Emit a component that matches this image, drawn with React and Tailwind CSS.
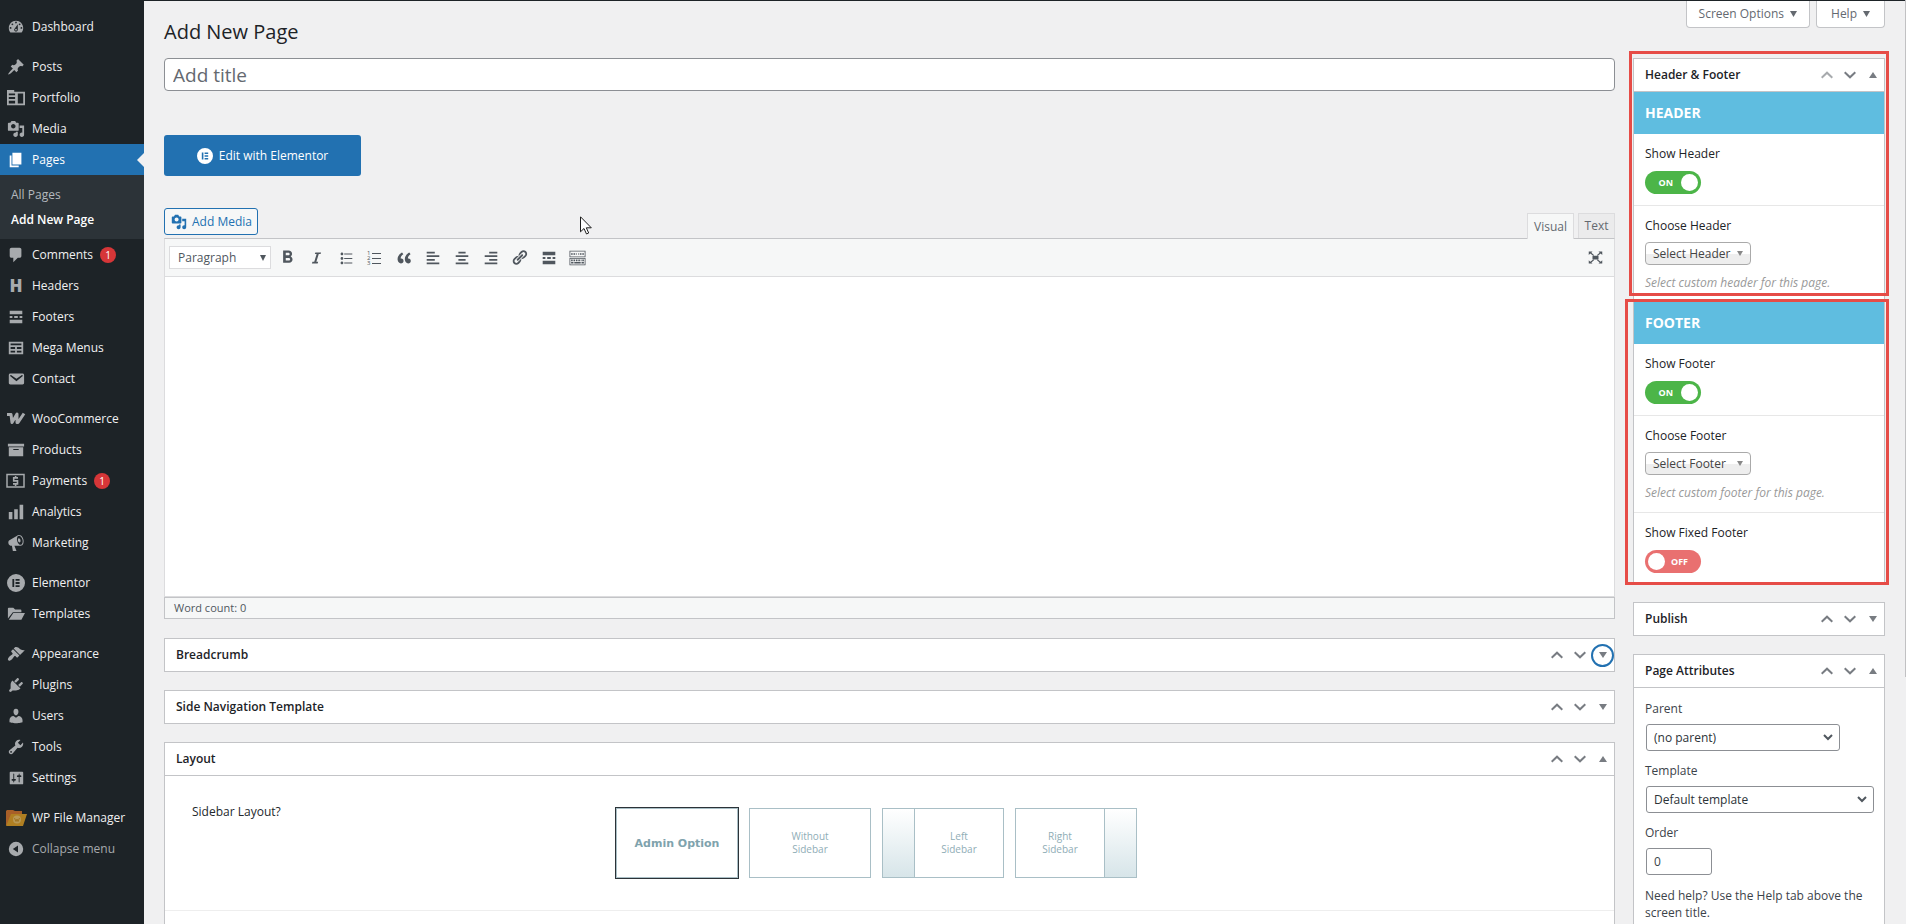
import { useState } from "react";
import clsx from "clsx";
import { MdFormatBold } from "react-icons/md";

const icons = {
  dashboard: "M3.76 16h12.48c1.1-1.37 1.76-3.11 1.76-5 0-4.42-3.58-8-8-8s-8 3.58-8 8c0 1.89.66 3.63 1.76 5zM10 4c.55 0 1 .45 1 1s-.45 1-1 1-1-.45-1-1 .45-1 1-1zM6 6c.55 0 1 .45 1 1s-.45 1-1 1-1-.45-1-1 .45-1 1-1zm8 0c.55 0 1 .45 1 1s-.45 1-1 1-1-.45-1-1 .45-1 1-1zm-5.37 5.55L12 7v6c0 1.1-.9 2-2 2s-2-.9-2-2c0-.57.24-1.08.63-1.45zM4 10c.55 0 1 .45 1 1s-.45 1-1 1-1-.45-1-1 .45-1 1-1zm12 0c.55 0 1 .45 1 1s-.45 1-1 1-1-.45-1-1 .45-1 1-1zm-5 3c0-.55-.45-1-1-1s-1 .45-1 1 .45 1 1 1 1-.45 1-1z",
  post: "M10.44 3.02l1.82-1.82 6.36 6.35-1.83 1.82c-1.05-.68-2.48-.57-3.41.36l-.75.75c-.92.93-1.04 2.35-.35 3.41l-1.83 1.82-2.41-2.41-2.8 2.79c-.42.42-3.38 2.71-3.8 2.29s1.86-3.39 2.28-3.81l2.79-2.79L4.1 9.36l1.83-1.82c1.05.69 2.48.57 3.4-.36l.75-.75c.93-.92 1.05-2.35.36-3.41z",
  portfolio: "M0 1h8v2h12v15H0V1zm2 4v2h7V5H2zm0 4v2h7V9H2zm0 4v3h7v-3H2zm10-8v11h6V5h-6z",
  media: "M13 11V4c0-.55-.45-1-1-1h-1.67L9 1H5L3.67 3H2c-.55 0-1 .45-1 1v7c0 .55.45 1 1 1h10c.55 0 1-.45 1-1zM7 4.5c1.38 0 2.5 1.12 2.5 2.5S8.38 9.5 7 9.5 4.5 8.38 4.5 7 5.62 4.5 7 4.5zM14 6h5v10.5c0 1.38-1.12 2.5-2.5 2.5S14 17.88 14 16.5s1.12-2.5 2.5-2.5c.17 0 .34.02.5.05V9h-3V6zm-4 8.05V13h2v3.5c0 1.38-1.12 2.5-2.5 2.5S7 17.88 7 16.5 8.12 14 9.5 14c.17 0 .34.02.5.05z",
  page: "M6 15V2h10v13H6zm-1 1h8v2H3V5h2v11z",
  comments: "M5 2h9c1.1 0 2 .9 2 2v7c0 1.1-.9 2-2 2h-2l-5 5v-5H5c-1.1 0-2-.9-2-2V4c0-1.1.9-2 2-2z",
  more: "M17 7V3H3v4h14zM6 11V9H3v2h3zm6 0V9H8v2h4zm5 0V9h-3v2h3zm0 6v-4H3v4h14z",
  table: "M18 17V3H2v14h16zM16 7H4V5h12v2zm-7 4H4V9h5v2zm7 0h-5V9h5v2zm-7 4H4v-2h5v2zm7 0h-5v-2h5v2z",
  email: "M3.87 4h13.25C18.37 4 19 4.59 19 5.79v8.42c0 1.19-.63 1.79-1.88 1.79H3.87c-1.25 0-1.88-.6-1.88-1.79V5.79c0-1.2.63-1.79 1.88-1.79zm6.62 8.6l6.74-5.53c.24-.2.43-.66.13-1.07-.29-.41-.82-.42-1.17-.17l-5.7 3.86L4.8 5.83c-.35-.25-.88-.24-1.17.17-.3.41-.11.87.13 1.07z",
  archive: "M19 3v3H1V3h18zM2 7h16v10H2V7zm11 3V9H7v1h6z",
  chart: "M18 18V2h-4v16h4zm-6 0V7H8v11h4zm-6 0v-8H2v8h4z",
  megaphone: "M18.15 5.94c.46 1.62.38 3.22-.02 4.48-.42 1.28-1.26 2.18-2.3 2.48-.16.06-.26.06-.4.06-.06.02-.12.02-.18.02-.06.02-.14.02-.22.02h-6.8l2.22 5.5c.02.14-.06.26-.14.34-.08.1-.24.16-.34.16H6.95c-.1 0-.26-.06-.34-.16-.08-.08-.16-.2-.14-.34l-1-5.5H4.25l-.02-.02c-.5.06-1.08-.18-1.54-.62s-.88-1.08-1.06-1.88c-.24-.8-.2-1.56-.02-2.2.18-.62.58-1.08 1.06-1.3l.02-.02 9-5.4c.1-.06.18-.1.24-.16.06-.04.14-.08.24-.12.16-.08.28-.12.5-.18 1.04-.3 2.24.1 3.22.98s1.84 2.24 2.26 3.86zm-2.58 5.98h-.02c.4-.1.74-.34 1.04-.7.58-.7.86-1.76.86-3.04 0-.64-.1-1.3-.28-1.98-.34-1.36-1.02-2.5-1.78-3.24s-1.68-1.1-2.46-.88c-.82.22-1.4.96-1.7 2-.32 1.04-.28 2.36.06 3.72.38 1.36 1 2.5 1.8 3.24.78.74 1.62 1.1 2.48.88zm-2.54-7.08c.22-.04.42-.02.62.04.38.16.76.48 1.02 1s.42 1.2.42 1.78c0 .3-.04.56-.12.8-.18.48-.44.84-.86.94-.34.1-.8-.06-1.14-.4s-.64-.86-.78-1.5c-.18-.62-.12-1.24.02-1.72s.48-.84.82-.94z",
  folder: "M1 15V4c0-.6.4-1 1-1h5l2 2h6c.6 0 1 .4 1 1v2H6.500L1 15zm1 1.500L7 9h13l-4 7.500H2z",
  appearance: "M14.48 11.06L7.41 3.99l1.5-1.5c.5-.56 2.3-.47 3.51.32 1.21.8 1.43 1.28 2.91 2.1 1.18.64 2.45 1.26 4.45.85zm-.71.71L6.7 4.7 4.93 6.47c-.39.39-.39 1.02 0 1.41l1.06 1.06c.39.39.39 1.03 0 1.42-.6.6-1.43 1.11-2.21 1.69-.35.26-.7.53-1.01.84C1.43 14.23.4 16.08 1.4 17.07c.99 1 2.84-.03 4.18-1.36.31-.31.58-.66.85-1.02.57-.78 1.08-1.61 1.69-2.21.39-.39 1.02-.39 1.41 0l1.06 1.06c.39.39 1.02.39 1.41 0z",
  plugins: "M13.11 4.36L9.87 7.6 8 5.73l3.24-3.24c.35-.34 1.05-.2 1.56.32.52.51.66 1.21.31 1.55zm-8 1.77l.91-1.12 9.01 9.01-1.19.84c-.71.71-2.63 1.16-3.82 1.16H6.14L4.9 17.26c-.59.59-1.54.59-2.12 0-.59-.58-.59-1.53 0-2.12l1.24-1.24v-3.88c0-1.13.4-3.19 1.09-3.89zm7.26 3.97l3.24-3.24c.34-.35 1.04-.21 1.55.31.52.51.66 1.21.31 1.55l-3.24 3.25z",
  users: "M10 9.25c-2.27 0-2.73-3.44-2.73-3.44C7 4.02 7.82 2 9.97 2c2.16 0 2.98 2.02 2.71 3.81 0 0-.41 3.44-2.68 3.44zm0 2.57L12.72 10c2.39 0 4.52 2.33 4.52 4.53v2.49s-3.65 1.13-7.24 1.13c-3.65 0-7.24-1.13-7.24-1.13v-2.49c0-2.25 1.94-4.48 4.47-4.48z",
  tools: "M16.68 9.77c-1.34 1.34-3.3 1.67-4.95.99l-5.41 6.52c-.99.99-2.59.99-3.58 0s-.99-2.59 0-3.57l6.52-5.42c-.68-1.65-.35-3.61.99-4.95 1.28-1.28 3.12-1.62 4.72-1.06l-2.89 2.89 2.82 2.82 2.86-2.87c.53 1.58.18 3.39-1.08 4.65zM3.81 16.21c.4.39 1.04.39 1.43 0 .4-.4.4-1.04 0-1.43-.39-.4-1.03-.4-1.43 0-.39.39-.39 1.03 0 1.43z",
  settings: "M18 16V4c0-.55-.45-1-1-1H4c-.55 0-1 .45-1 1v12c0 .55.45 1 1 1h13c.55 0 1-.45 1-1zM8 11h1c.55 0 1 .45 1 1s-.45 1-1 1H8v1.5c0 .28-.22.5-.5.5s-.5-.22-.5-.5V13H6c-.55 0-1-.45-1-1s.45-1 1-1h1V5.5c0-.28.22-.5.5-.5s.5.22.5.5V11zm5-2h-1c-.55 0-1-.45-1-1s.45-1 1-1h1V5.5c0-.28.22-.5.5-.5s.5.22.5.5V7h1c.55 0 1 .45 1 1s-.45 1-1 1h-1v5.5c0 .28-.22.5-.5.5s-.5-.22-.5-.5V9z",
  collapse: "M10 1a9 9 0 1 0 0 18a9 9 0 1 0 0-18zM12.500 5.500v9L6 10z",
  elementor: "M10 0a10 10 0 1 0 0 20a10 10 0 1 0 0-20zM6 5.500h2v9H6zM9.500 5.500H14v2H9.500zM9.500 9H14v2H9.500zM9.500 12.500H14v2H9.500z",
  italic: "M14.78 6h-2.13l-2.8 9h2.12l-.62 2H4.6l.62-2h2.14l2.8-9H8.03l.62-2h6.75z",
  bullets: "M5.5 7C4.67 7 4 6.33 4 5.5 4 4.68 4.67 4 5.5 4 6.32 4 7 4.68 7 5.5 7 6.33 6.32 7 5.5 7zM8 5h9v1H8V5zm-2.5 7c-.83 0-1.5-.67-1.5-1.5C4 9.68 4.67 9 5.5 9c.82 0 1.5.68 1.5 1.5 0 .83-.68 1.5-1.5 1.5zM8 10h9v1H8v-1zm-2.5 7c-.83 0-1.5-.67-1.5-1.5 0-.82.67-1.5 1.5-1.5.82 0 1.5.68 1.5 1.5 0 .83-.68 1.5-1.5 1.5zM8 15h9v1H8v-1z",
  quote: "M9.49 13.22c0-.74-.2-1.38-.61-1.9-.62-.78-1.83-.88-2.53-.72-.29-1.65 1.11-3.75 2.92-4.65L7.88 4c-2.73 1.3-5.42 4.28-4.96 8.05C3.21 14.43 4.59 16 6.54 16c.85 0 1.56-.25 2.12-.75s.83-1.18.83-2.03zm8.05 0c0-.74-.2-1.38-.61-1.9-.63-.78-1.83-.88-2.53-.72-.29-1.65 1.11-3.75 2.92-4.65L15.93 4c-2.73 1.3-5.41 4.28-4.95 8.05.29 2.38 1.66 3.95 3.61 3.95.85 0 1.56-.25 2.12-.75s.83-1.18.83-2.03z",
  alignLeft: "M12 5V3H3v2h9zm5 4V7H3v2h14zm-5 4v-2H3v2h9zm5 4v-2H3v2h14z",
  alignCenter: "M14 5V3H6v2h8zm3 4V7H3v2h14zm-3 4v-2H6v2h8zm3 4v-2H3v2h14z",
  alignRight: "M17 5V3H8v2h9zm0 4V7H3v2h14zm0 4v-2H8v2h9zm0 4v-2H3v2h14z",
  link: "M17.74 2.76c1.68 1.69 1.68 4.41 0 6.1l-1.53 1.52c-1.12 1.12-2.7 1.47-4.14 1.09l2.62-2.61.76-.77.76-.76c.84-.84.84-2.2 0-3.04-.84-.85-2.2-.85-3.04 0l-.77.76-3.38 3.38c-.37-1.44-.02-3.02 1.1-4.14l1.52-1.53c1.69-1.68 4.42-1.68 6.1 0zM8.59 13.43l5.34-5.34c.42-.42.42-1.1 0-1.52-.44-.43-1.13-.39-1.53 0l-5.33 5.34c-.42.42-.42 1.1 0 1.52.44.43 1.13.39 1.52 0zm-.76 2.29l4.14-4.15c.38 1.44.03 3.02-1.09 4.14l-1.52 1.53c-1.69 1.68-4.41 1.68-6.1 0-1.68-1.68-1.68-4.42 0-6.1l1.53-1.52c1.12-1.12 2.7-1.47 4.14-1.1l-4.14 4.15c-.85.84-.85 2.2 0 3.05.84.84 2.2.84 3.04 0z",
  keyboard: "M0 1h20v8H0V1zm1 1v6h18V2H1zM0 10h20v9H0v-9zm1 1v7h18v-7H1zM2 4h2v2H2zM5 4h2v2H5zM8 4h1v2H8zM11 4h1v2h-1zM13 4h2v2h-2zM16 4h2v2h-2zM2 12h2v2H2zM5 12h2v2H5zM8 12h2v2H8zM11 12h2v2h-2zM14 12h1v2h-1zM16 12h2v2h-2zM2 15h3v2H2zM6 15h8v2H6zM15 15h3v2h-3z",
  fullscreen: "M1 2h5L4.500 3.500 8 6.500 7 7.500 3 4.500 1 6.500zM19 2h-5l1.500 1.500L12 6.500l1 1 4-3 2 2zM1 18h5l-1.500-1.500L8 13.500l-1-1-4 3-2-2zM19 18h-5l1.500-1.500-3.500-3 1-1 4 3 2-2zM6 7.500h8v5H6z",
};

const Icon = ({ name, className = "size-[18px]" }) => (
  <svg viewBox="0 0 20 20" fill="currentColor" fillRule="evenodd" className={clsx("shrink-0 overflow-visible", className)} aria-hidden="true">
    <path d={icons[name]} />
  </svg>
);

const HeadingIcon = () => <span className="w-[18px] text-center text-[17px] leading-[18px] font-extrabold">H</span>;

const WooIcon = () => (
  <svg viewBox="0 0 18 18" className="size-[18px] shrink-0 overflow-visible" fill="none" stroke="currentColor" strokeWidth="3" aria-hidden="true">
    <path d="M0 4.500h4l1 8 5-8.500 0 8.500h1l6-9" strokeLinejoin="round" />
  </svg>
);

const PaymentsIcon = () => (
  <svg viewBox="0 0 18 16" className="h-4 w-[18px] shrink-0 overflow-visible" fill="none" stroke="currentColor" aria-hidden="true">
    <path d="M0 1.500h17v12.500H0z" strokeWidth="1.500" />
    <path d="M11 4.900H6.700v3h3.800v3H6M8.600 3v2M8.600 11v2" strokeWidth="1.600" />
  </svg>
);

const FileManagerIcon = () => (
  <svg viewBox="0 0 21 18" className="h-[18px] w-[21px] shrink-0" aria-hidden="true">
    <path d="M1 1h6l2 1h7v14H0V2z" fill="#a85f28" />
    <path d="M5 5h16l-4 12H0z" fill="#b07f22" />
    <circle cx="11" cy="10.500" r="4" fill="#b99955" />
    <path d="M8.500 9l1.500 3.500L11 10l1 2.500L13.500 9" fill="none" stroke="#a27422" />
  </svg>
);

const NumberedIcon = () => (
  <svg viewBox="0 0 18 18" className="size-[18px]" fill="currentColor" aria-hidden="true">
    <path d="M6 4h9v1H6zM6 9h9v1H6zM6 14h9v1H6z" />
    <text x="1" y="6" fontSize="6">1</text>
    <text x="1" y="11" fontSize="6">2</text>
    <text x="1" y="16" fontSize="6">3</text>
  </svg>
);

const menu = [
  [{ label: "Dashboard", icon: "dashboard" }],
  [
    { label: "Posts", icon: "post" },
    { label: "Portfolio", icon: "portfolio" },
    { label: "Media", icon: "media" },
    { label: "Pages", icon: "page", current: true, children: ["All Pages", "Add New Page"] },
    { label: "Comments", icon: "comments", count: 1 },
    { label: "Headers", Custom: HeadingIcon },
    { label: "Footers", icon: "more" },
    { label: "Mega Menus", icon: "table" },
    { label: "Contact", icon: "email" },
  ],
  [
    { label: "WooCommerce", Custom: WooIcon },
    { label: "Products", icon: "archive" },
    { label: "Payments", Custom: PaymentsIcon, count: 1 },
    { label: "Analytics", icon: "chart" },
    { label: "Marketing", icon: "megaphone" },
  ],
  [
    { label: "Elementor", icon: "elementor" },
    { label: "Templates", icon: "folder" },
  ],
  [
    { label: "Appearance", icon: "appearance" },
    { label: "Plugins", icon: "plugins" },
    { label: "Users", icon: "users" },
    { label: "Tools", icon: "tools" },
    { label: "Settings", icon: "settings" },
  ],
  [{ label: "WP File Manager", Custom: FileManagerIcon }],
];

const MenuItem = ({ label, icon, Custom, count, current, children }) => (
  <li>
    <a href="#" className={clsx("relative flex h-[31px] items-center gap-[7px] pl-[7px] whitespace-nowrap", current ? "bg-[#2271b1] text-white" : "text-[#f0f0f1]")}>
      <span className={clsx("flex w-[18px] shrink-0 justify-center", current ? "text-white" : "text-[#a7aaad]")}>
        {Custom ? <Custom /> : <Icon name={icon} />}
      </span>
      {label}
      {count && <span className="flex size-4 items-center justify-center rounded-full bg-[#d63638] text-[10px] text-white">{count}</span>}
      {current && <span className="absolute right-0 border-y-[7px] border-r-[7px] border-y-transparent border-r-[#f0f0f1]" />}
    </a>
    {children && (
      <ul className="bg-[#2c3338] py-[7px]">
        {children.map((c) => (
          <li key={c}>
            <a href="#" className={clsx("flex h-[25px] items-center pl-[11px]", c === "Add New Page" ? "font-semibold text-white" : "text-[#b4b9be]")}>{c}</a>
          </li>
        ))}
      </ul>
    )}
  </li>
);

const Sidebar = () => (
  <nav className="w-36 shrink-0 bg-[#1d2327] pt-2.5" aria-label="Main menu">
    {menu.map((group, i) => (
      <ul key={i} className="mb-[9px] last-of-type:mb-0">
        {group.map((item) => <MenuItem key={item.label} {...item} />)}
      </ul>
    ))}
    <button className="flex h-[31px] items-center gap-[7px] pl-[7px] text-[#a7aaad]">
      <Icon name="collapse" className="mx-px size-4" />
      Collapse menu
    </button>
  </nav>
);

const Chevron = ({ up }) => (
  <svg viewBox="0 0 12 8" className="h-2 w-3" fill="none" stroke="currentColor" strokeWidth="2" aria-hidden="true">
    <path d={up ? "M.7 6.700L6 1.700l5.300 5" : "M.7 1.300L6 6.300l5.300-5"} />
  </svg>
);

const Triangle = ({ up, className = "h-[6px] w-2" }) => (
  <svg viewBox="0 0 8 6" preserveAspectRatio="none" className={className} fill="currentColor" aria-hidden="true">
    <path d={up ? "M0 6L4 0l4 6z" : "M0 0l4 6 4-6z"} />
  </svg>
);

const BoxHead = ({ title, open, first, focused }) => (
  <div className={clsx("flex h-8 items-center justify-between pl-[11px]", open && "h-[33px] border-b border-[#c3c4c7]")}>
    <h2 className="font-semibold text-[#1d2327]">{title}</h2>
    <div className="flex text-[#787c82]">
      <button aria-label={`Move ${title} up`} className={clsx("flex size-[23px] items-center justify-center", first && "text-[#a7aaad]")}><Chevron up /></button>
      <button aria-label={`Move ${title} down`} className="flex size-[23px] items-center justify-center"><Chevron /></button>
      <button aria-label={`Toggle ${title}`} className={clsx("flex size-[23px] items-center justify-center rounded-full", focused && "border-2 border-[#2271b1]")}><Triangle up={open} /></button>
    </div>
  </div>
);

const Box = ({ children, ...head }) => (
  <section className="border border-[#c3c4c7] bg-white">
    <BoxHead {...head} />
    {children}
  </section>
);

const Toggle = ({ id, defaultOn = false }) => {
  const [on, setOn] = useState(defaultOn);
  return (
    <label htmlFor={id} className={clsx("flex h-[23px] w-14 items-center rounded-full px-[3px] text-[9px] font-bold text-white", on ? "justify-end gap-2 bg-[#4cb548]" : "flex-row-reverse justify-end gap-[6px] bg-[#e97070]")}>
      <input id={id} type="checkbox" className="sr-only" checked={on} onChange={() => setOn(!on)} />
      {on ? "ON" : "OFF"}
      <span className="size-[17px] rounded-full bg-white" />
    </label>
  );
};

const Band = ({ children }) => <h3 className="flex h-[42px] items-center bg-[#5fbde0] pl-[11px] text-[14px] font-bold text-white">{children}</h3>;

const SwitchField = ({ id, label, on, last }) => (
  <div className={clsx("px-[11px] pt-[11px]", last ? "pb-2.5" : "border-b border-[#e7e7e7] pb-[11px]")}>
    <label htmlFor={id} className="mb-2 block leading-[18px] font-medium text-[#1d2327]">{label}</label>
    <Toggle id={id} defaultOn={on} />
  </div>
);

const ChooseField = ({ id, label, option, help, last }) => (
  <div className={clsx("px-[11px] pt-[11px] pb-2.5", !last && "border-b border-[#e7e7e7]")}>
    <label htmlFor={id} className="block leading-[18px] font-medium text-[#1d2327]">{label}</label>
    <div className="relative mt-[7px] mb-[9px] w-[106px]">
      <select id={id} className="block h-[23px] w-full appearance-none rounded-[4px] border border-[#aaa] bg-linear-to-b from-white from-50% to-[#eee] to-55% pl-[7px] text-[#444]">
        <option>{option}</option>
      </select>
      <Triangle className="pointer-events-none absolute top-[9px] right-2 h-[5px] w-[6px] text-[#888]" />
    </div>
    <p className="leading-[18px] text-[#999] italic">{help}</p>
  </div>
);

const HeaderFooterBox = () => (
  <section className="border border-[#c3c4c7] bg-white">
    <div className="relative">
      <BoxHead title="Header & Footer" open first />
      <Band>HEADER</Band>
      <SwitchField id="show-header" label="Show Header" on />
      <ChooseField id="choose-header" label="Choose Header" option="Select Header" help="Select custom header for this page." last />
      <span className="pointer-events-none absolute -top-2 -right-[5px] bottom-[6px] -left-[5px] border-3 border-[#e64c47]" />
    </div>
    <div className="relative">
      <Band>FOOTER</Band>
      <SwitchField id="show-footer" label="Show Footer" on />
      <ChooseField id="choose-footer" label="Choose Footer" option="Select Footer" help="Select custom footer for this page." />
      <SwitchField id="fixed-footer" label="Show Fixed Footer" last />
      <span className="pointer-events-none absolute -top-[3px] -right-[5px] -bottom-[2px] -left-[9px] border-3 border-[#e64c47]" />
    </div>
  </section>
);

const AttributeSelect = ({ id, label, option, className }) => (
  <div className="mb-[11px]">
    <label htmlFor={id} className="mb-[6px] block leading-[18px] font-medium">{label}</label>
    <div className={clsx("relative ml-px", className)}>
      <select id={id} className="block h-[27px] w-full appearance-none rounded-[3px] border border-[#8c8f94] bg-white pl-[7px] text-[#2c3338]">
        <option>{option}</option>
      </select>
      <svg viewBox="0 0 10 7" className="pointer-events-none absolute top-[10px] right-[7px] h-[7px] w-[10px]" fill="none" stroke="#50575e" strokeWidth="2" aria-hidden="true">
        <path d="M1 1l4 4 4-4" />
      </svg>
    </div>
  </div>
);

const PageAttributes = () => (
  <Box title="Page Attributes" open>
    <div className="px-[11px] pt-3 pb-3 text-[#3c434a]">
      <AttributeSelect id="parent" label="Parent" option="(no parent)" className="w-[194px]" />
      <AttributeSelect id="template" label="Template" option="Default template" className="w-[228px]" />
      <label htmlFor="order" className="mb-[6px] block leading-[18px] font-medium">Order</label>
      <input id="order" defaultValue="0" className="ml-px block h-[27px] w-[66px] rounded-[3px] border border-[#8c8f94] pl-[7px]" />
      <p className="mt-3 leading-[17px]">Need help? Use the Help tab above the screen title.</p>
    </div>
  </Box>
);

const tools = [
  ["Bold", <MdFormatBold className="size-[21px]" />],
  ["Italic", <Icon name="italic" className="size-[17px]" />],
  ["Bulleted list", <Icon name="bullets" />],
  ["Numbered list", <NumberedIcon />],
  ["Blockquote", <Icon name="quote" />],
  ["Align left", <Icon name="alignLeft" />],
  ["Align center", <Icon name="alignCenter" />],
  ["Align right", <Icon name="alignRight" />],
  ["Insert link", <Icon name="link" className="size-[17px]" />],
  ["Read more", <Icon name="more" />],
  ["Toolbar toggle", <Icon name="keyboard" className="h-4 w-[17px]" />],
];

const Editor = () => (
  <div>
    <div className="relative flex items-start justify-between">
      <button className="flex h-[27px] items-center gap-1 rounded-[3px] border border-[#2271b1] bg-[#f6f7f7] px-[5px] text-[#2271b1]">
        <Icon name="media" className="mx-px size-4" />
        Add Media
      </button>
      <div className="z-10 mt-[5px] flex gap-1 text-[#646970]">
        <button className="h-[26px] w-[47px] border border-b-0 border-[#dcdcde] bg-[#f6f7f7]">Visual</button>
        <button className="h-[25px] w-[37px] border border-b-0 border-[#dcdcde] bg-[#ebebec]">Text</button>
      </div>
      <svg viewBox="0 0 12 19" className="pointer-events-none absolute top-2 left-[416px] h-[19px] w-3" aria-hidden="true">
        <path d="M.5.800v15l3.500-3.300 2.500 5.500 2.200-1-2.400-5.200h5z" fill="#fff" stroke="#1d1d1d" />
      </svg>
    </div>
    <div className="-mt-px border border-[#dcdcde] border-t-[#c3c4c7] bg-white">
      <div className="flex h-[38px] items-center border-b border-[#dcdcde] bg-[#f6f7f7] pl-1 text-[#50575e]">
        <div className="relative mr-[2px] w-[102px]">
          <select aria-label="Text style" className="block h-[23px] w-full appearance-none border border-[#dcdcde] bg-white pl-2">
            <option>Paragraph</option>
          </select>
          <Triangle className="pointer-events-none absolute top-[9px] right-[5px] h-[6px] w-[6px]" />
        </div>
        {tools.map(([label, icon]) => (
          <button key={label} aria-label={label} className="flex h-6 w-[29px] items-center justify-center">{icon}</button>
        ))}
        <button aria-label="Fullscreen" className="mr-2.5 ml-auto"><Icon name="fullscreen" className="h-[15px] w-[17px]" /></button>
      </div>
      <textarea aria-label="Page content" className="block h-[319px] w-full resize-none outline-none" />
    </div>
    <p className="flex h-[22px] items-center border border-[#c3c4c7] bg-[#f6f7f7] pl-[9px] text-[11px] text-[#50575e]">Word count: 0</p>
  </div>
);

const LayoutChoice = ({ value, children, checked }) => (
  <label className={clsx("flex h-[70px] w-[122px] border border-[#a9bfc6] text-center text-[10px] leading-[13px] text-[#8fadb6]", checked && "outline outline-[#2c3338]")}>
    <input type="radio" name="sidebar-layout" value={value} defaultChecked={checked} className="sr-only" />
    {children}
  </label>
);

const LayoutBox = () => (
  <Box title="Layout" open>
    <fieldset className="flex border-b border-[#eee] pt-8 pr-5 pb-8 pl-[27px]">
      <legend className="float-left w-[424px] shrink-0 leading-[8px] font-medium text-[#23282d]">Sidebar Layout?</legend>
      <div className="flex gap-[11px]">
        <LayoutChoice value="admin" checked>
          <span className="m-auto font-['DejaVu_Sans',sans-serif] text-[11px] font-bold text-[#7fa3ad]">Admin Option</span>
        </LayoutChoice>
        <LayoutChoice value="none"><span className="m-auto">Without<br />Sidebar</span></LayoutChoice>
        <LayoutChoice value="left">
          <span className="w-8 border-r border-[#a9bfc6] bg-linear-to-b from-white to-[#d7e5e9]" />
          <span className="m-auto">Left<br />Sidebar</span>
        </LayoutChoice>
        <LayoutChoice value="right">
          <span className="m-auto">Right<br />Sidebar</span>
          <span className="w-8 border-l border-[#a9bfc6] bg-linear-to-b from-white to-[#d7e5e9]" />
        </LayoutChoice>
      </div>
    </fieldset>
    <div className="h-20" />
  </Box>
);

const App = () => (
  <div className="flex h-screen overflow-hidden border-t border-[#1d2327] bg-[#f0f0f1] font-['Open_Sans','Noto_Sans',sans-serif] text-[12px] leading-[18px] text-[#3c434a]">
    <Sidebar />
    <main className="min-w-0 flex-1 pr-[21px] pl-5">
      <div className="flex h-[57px] justify-between">
        <h1 className="mt-[17px] text-[20px] leading-7 text-[#1d2327]">Add New Page</h1>
        <div className="flex items-start gap-[6px] text-[#646970]">
          <button className="flex h-[27px] items-center gap-[6px] rounded-b-[4px] border border-t-0 border-[#c3c4c7] bg-white px-3">Screen Options <Triangle className="h-[6px] w-[7px]" /></button>
          <button className="flex h-[27px] items-center gap-[6px] rounded-b-[4px] border border-t-0 border-[#c3c4c7] bg-white px-3.5">Help <Triangle className="h-[6px] w-[7px]" /></button>
        </div>
      </div>
      <div className="flex items-start gap-[18px]">
        <div className="min-w-0 flex-1">
          <input aria-label="Add title" placeholder="Add title" className="block h-[33px] w-full rounded-[4px] border border-[#8c8f94] bg-white px-2 pt-px text-[19px] placeholder:text-[#646970]" />
          <button className="mt-11 mb-8 flex h-[41px] w-[197px] items-center justify-center gap-[6px] rounded-[3px] bg-[#2271b1] text-white">
            <Icon name="elementor" className="size-4" />
            Edit with Elementor
          </button>
          <Editor />
          <div className="mt-[19px] flex flex-col gap-[18px]">
            <Box title="Breadcrumb" focused />
            <Box title="Side Navigation Template" />
            <LayoutBox />
          </div>
        </div>
        <aside className="flex w-[252px] shrink-0 flex-col gap-[18px]">
          <HeaderFooterBox />
          <Box title="Publish" />
          <PageAttributes />
        </aside>
      </div>
    </main>
    <span className="absolute top-0 right-0 h-[677px] w-px bg-[#c1c1c3]" />
  </div>
);

export default App;
